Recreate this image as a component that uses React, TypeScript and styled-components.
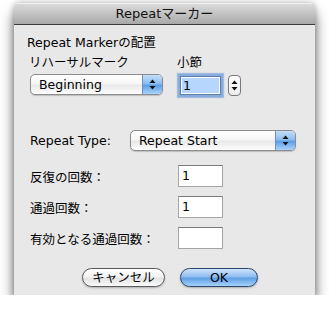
import styled, { createGlobalStyle } from 'styled-components';

const GlobalStyle = createGlobalStyle`
  html, body {
    margin: 0;
    padding: 0;
    background: #ffffff;
  }
  body {
    font-family: 'DejaVu Sans', 'Noto Sans CJK JP', sans-serif;
    font-size: 12.5px;
    color: #000;
  }
`;

const Arrows = () => (
  <svg width="7" height="11" viewBox="0 0 7 11">
    <path d="M3.5 0.5 L6.5 4 L0.5 4 Z" fill="#111" />
    <path d="M0.5 7 L6.5 7 L3.5 10.5 Z" fill="#111" />
  </svg>
);

const PopUpButton = ({ label, width }: { label: string; width: number }) => (
  <StyledPopUp $width={width}>
    <StyledPopUpText>{label}</StyledPopUpText>
    <StyledPopUpArrows>
      <Arrows />
    </StyledPopUpArrows>
  </StyledPopUp>
);

const App = () => {
  return (
    <>
      <GlobalStyle />
      <StyledWindow>
        <StyledTitleBar>Repeatマーカー</StyledTitleBar>
        <StyledBody>
          <StyledSectionTitle>Repeat Markerの配置</StyledSectionTitle>
          <StyledPlacementGrid>
            <StyledSubLabel>リハーサルマーク</StyledSubLabel>
            <StyledSubLabel>小節</StyledSubLabel>
            <StyledPopUpCell>
              <PopUpButton label="Beginning" width={133} />
            </StyledPopUpCell>
            <StyledMeasureGroup>
              <StyledTextField $focused>
                <StyledSelection>1</StyledSelection>
              </StyledTextField>
              <StyledStepper>
                <Arrows />
              </StyledStepper>
            </StyledMeasureGroup>
          </StyledPlacementGrid>

          <StyledTypeRow>
            <span>Repeat Type:</span>
            <PopUpButton label="Repeat Start" width={166} />
          </StyledTypeRow>

          <StyledFieldList>
            <StyledFieldRow>
              <StyledRowLabel>反復の回数：</StyledRowLabel>
              <StyledTextField>1</StyledTextField>
            </StyledFieldRow>
            <StyledFieldRow>
              <StyledRowLabel>通過回数：</StyledRowLabel>
              <StyledTextField>1</StyledTextField>
            </StyledFieldRow>
            <StyledFieldRow>
              <StyledRowLabel>有効となる通過回数：</StyledRowLabel>
              <StyledTextField />
            </StyledFieldRow>
          </StyledFieldList>

          <StyledButtonRow>
            <StyledPushButton $width={83}>キャンセル</StyledPushButton>
            <StyledPushButton $width={78} $default>
              OK
            </StyledPushButton>
          </StyledButtonRow>
        </StyledBody>
      </StyledWindow>
    </>
  );
};

export default App;

const StyledWindow = styled.div`
  margin: 3px 0 0 14px;
  width: 301px;
  height: 292px;
  background: #e8e8e8;
  border-radius: 5px 5px 0 0;
  box-shadow: 0 10px 14px rgba(0, 0, 0, 0.55), 0 0 6px rgba(0, 0, 0, 0.28);
  overflow: hidden;
  display: flex;
  flex-direction: column;
`;

const StyledTitleBar = styled.div`
  height: 20px;
  line-height: 20px;
  text-align: center;
  font-size: 13px;
  color: #111;
  background: linear-gradient(#dadada, #c2c2c2 50%, #a8a8a8);
  border-top: 1px solid #efefef;
  border-bottom: 1px solid #3c3c3c;
`;

const StyledBody = styled.div`
  padding: 10px 0 0 0;
  display: flex;
  flex-direction: column;
`;

const StyledSectionTitle = styled.div`
  margin-left: 13px;
  line-height: 16px;
`;

const StyledPlacementGrid = styled.div`
  margin: 4px 0 0 15px;
  display: grid;
  grid-template-columns: 148px auto;
  row-gap: 3px;
  line-height: 16px;
`;

const StyledSubLabel = styled.span`
  white-space: nowrap;
`;

const StyledPopUpCell = styled.div`
  padding-left: 1px;
`;

const StyledMeasureGroup = styled.div`
  display: flex;
  align-items: center;
  gap: 5px;
  padding-left: 1px;
`;

const StyledPopUp = styled.div<{ $width: number }>`
  width: ${(p) => p.$width}px;
  height: 21px;
  box-sizing: border-box;
  display: flex;
  border: 1px solid #8c8c8c;
  border-radius: 5px;
  background: linear-gradient(#ffffff, #f6f6f6 45%, #e9e9e9 55%, #fdfdfd);
  box-shadow: 0 1px 1px rgba(0, 0, 0, 0.18);
  overflow: hidden;
`;

const StyledPopUpText = styled.span`
  flex: 1;
  padding-left: 8px;
  line-height: 19px;
  white-space: nowrap;
`;

const StyledPopUpArrows = styled.span`
  width: 19px;
  border-left: 1px solid #6f8fbf;
  background: linear-gradient(#c4def8, #8dbdf0 45%, #5c9fe6 55%, #a9d4fb);
  display: flex;
  align-items: center;
  justify-content: center;
`;

const StyledTextField = styled.div<{ $focused?: boolean }>`
  width: 45px;
  height: 22px;
  box-sizing: border-box;
  background: #ffffff;
  border: 1px solid #a5a5a5;
  border-top-color: #7b7b7b;
  padding: 2px 3px;
  line-height: 16px;
  ${(p) =>
    p.$focused &&
    `
    width: 41px;
    height: 19px;
    margin: 2px;
    padding: 1px;
    border-color: #5e7fa8;
    box-shadow: 0 0 0 2px #87acde, 0 0 1px 3px rgba(120, 160, 215, 0.6);
  `}
`;

const StyledSelection = styled.div`
  height: 100%;
  background: #b6d6fd;
  padding-left: 1px;
  line-height: 15px;
`;

const StyledStepper = styled.div`
  width: 11px;
  height: 19px;
  border: 1px solid #7a7a7a;
  border-radius: 4px;
  background: linear-gradient(#ffffff, #ececec);
  display: flex;
  align-items: center;
  justify-content: center;
`;

const StyledTypeRow = styled.div`
  margin: 32px 0 0 16px;
  display: flex;
  align-items: center;
  height: 23px;
  > span {
    width: 100px;
    white-space: nowrap;
  }
`;

const StyledFieldList = styled.div`
  margin: 13px 0 0 16px;
  display: flex;
  flex-direction: column;
  gap: 9px;
`;

const StyledFieldRow = styled.div`
  display: flex;
  align-items: center;
`;

const StyledRowLabel = styled.span`
  width: 148px;
  white-space: nowrap;
`;

const StyledButtonRow = styled.div`
  margin: 19px 0 0 68px;
  display: flex;
  gap: 15px;
`;

const StyledPushButton = styled.div<{ $width: number; $default?: boolean }>`
  width: ${(p) => p.$width}px;
  height: 19px;
  box-sizing: border-box;
  border-radius: 10px;
  text-align: center;
  line-height: 17px;
  font-size: 12.5px;
  border: 1px solid ${(p) => (p.$default ? '#27476f' : '#5a5a5a')};
  background: ${(p) =>
    p.$default
      ? 'linear-gradient(#cfe4fb, #8ebdf0 45%, #5fa0e6 55%, #a7d3fb)'
      : 'linear-gradient(#ffffff, #f3f3f3 45%, #e3e3e3 55%, #fbfbfb)'};
  box-shadow: 0 1px 2px rgba(0, 0, 0, 0.25);
`;
